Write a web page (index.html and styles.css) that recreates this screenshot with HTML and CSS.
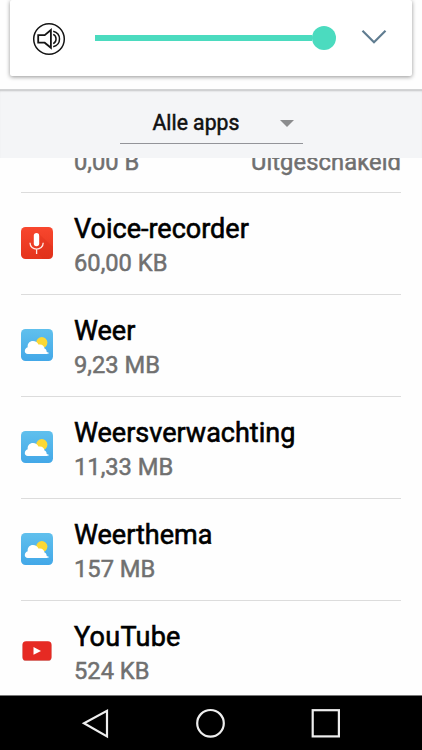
FILE: index.html
```
<!DOCTYPE html>
<html lang="nl">
<head>
<meta charset="utf-8">
<title>Apps</title>
<link rel="stylesheet" href="styles.css">
</head>
<body>
<svg width="0" height="0" class="defs" aria-hidden="true">
  <defs>
    <linearGradient id="sky" x1="0" y1="0" x2="0" y2="1"><stop offset="0" stop-color="#60c0ed"/><stop offset="1" stop-color="#43a8e8"/></linearGradient>
    <linearGradient id="red" x1="0" y1="0" x2="0" y2="1"><stop offset="0" stop-color="#f8472e"/><stop offset="1" stop-color="#e5341c"/></linearGradient>
    <symbol id="weather" viewBox="0 0 32 32">
      <rect width="32" height="32" rx="4.5" fill="url(#sky)"/>
      <circle cx="20.8" cy="13.6" r="5.6" fill="#fcd835"/>
      <path d="M6.8 24.9C4.8 24.9 3.8 23.8 3.8 22.3C3.8 20.3 5 18.8 6.7 18.3C6.2 14.6 8.6 11.9 12 11.9C14.6 11.9 16.5 13.2 17.4 15.6C20.6 14.7 23.4 16.6 23.5 19.6C25 20 25.6 21.2 25.6 22.7C26.4 23.4 27.3 23.8 28.3 24.1Q27.5 24.9 25.8 24.9Z" fill="#fff"/>
    </symbol>
  </defs>
</svg>
<div class="screen">
  <section class="panel">
    <div class="volume">
      <svg class="speaker" width="34" height="34" viewBox="0 0 34 34" fill="none" stroke="#151515">
        <circle cx="17" cy="17" r="15.3" stroke-width="1.5"/>
        <path d="M6.2 13.2H12.7L18.9 8V25.8L12.7 20.7H6.2Z" stroke-width="1.8"/>
        <path d="M21.2 12.4C25 14 25 20 21.2 21.6M21.2 9.2C29.6 11.4 29.6 22.6 21.2 24.8" stroke-width="1.5"/>
      </svg>
      <div class="slider"><div class="track"></div><div class="thumb"></div></div>
      <svg class="chevron" width="26" height="16" viewBox="0 0 26 16" fill="none" stroke="#607d91" stroke-width="2.2"><path d="M1.5 1.8L13 13.2L24.5 1.8"/></svg>
    </div>
  </section>
  <header class="filter">
    <div class="select"><span class="select-label">Alle apps</span><span class="caret"></span></div>
  </header>
  <main class="list">
    <div class="row row-cut"><span class="size">0,00 B</span><span class="size">Uitgeschakeld</span></div>
    <div class="row">
      <svg class="icon" viewBox="0 0 32 32"><rect width="32" height="32" rx="4.5" fill="url(#red)"/><path d="M18 7L32 20V28Q32 32 28 32H22L16 25Z" fill="#d82b17" opacity=".3"/><rect x="12.8" y="6" width="5.4" height="13.2" rx="2.7" fill="#fff"/><path d="M9 15.8C9 24.2 22.2 24.2 22.2 15.8M15.6 22V27" fill="none" stroke="#ffe9e5" stroke-width="1.3"/></svg>
      <div class="info"><div class="name">Voice-recorder</div><div class="size">60,00 KB</div></div>
    </div>
    <div class="row">
      <svg class="icon"><use href="#weather"/></svg>
      <div class="info"><div class="name">Weer</div><div class="size">9,23 MB</div></div>
    </div>
    <div class="row">
      <svg class="icon"><use href="#weather"/></svg>
      <div class="info"><div class="name">Weersverwachting</div><div class="size">11,33 MB</div></div>
    </div>
    <div class="row">
      <svg class="icon"><use href="#weather"/></svg>
      <div class="info"><div class="name">Weerthema</div><div class="size">157 MB</div></div>
    </div>
    <div class="row">
      <svg class="icon" viewBox="0 0 32 32"><rect x="1.5" y="6.8" width="29" height="19.3" rx="3.6" fill="#b8a5a3" opacity=".7"/><rect x="1.5" y="6.2" width="29" height="19.3" rx="3.6" fill="#e62a23"/><path d="M12.5 12L20 15.9L12.5 19.8Z" fill="#fff"/></svg>
      <div class="info"><div class="name name-wide">YouTube</div><div class="size">524 KB</div></div>
    </div>
  </main>
  <nav class="navbar">
    <svg width="422" height="54" viewBox="0 0 422 54" fill="none" stroke="#eee" stroke-width="2.2"><path d="M107 14.8V40.4L84 27.3Z"/><circle cx="210.5" cy="27.3" r="13.3"/><rect x="312.7" y="14.2" width="26.2" height="26.2"/></svg>
  </nav>
</div>
</body>
</html>
```
FILE: styles.css
```
* { box-sizing: border-box; }
body { margin: 0; background: #fff; font-family: Roboto, "Liberation Sans", sans-serif; }
.defs { position: absolute; }
.screen { width: 422px; height: 750px; display: flex; flex-direction: column; overflow: hidden; background: #fefefe; }
svg { display: block; flex: none; }
.panel { height: 90px; flex: none; padding: 0 10px; background: #fefefe; border-bottom: 1px solid #d2d3d4; }
.volume { height: 76px; display: flex; align-items: center; padding: 0 25px 0 22px; border-radius: 2px; background: #fff; box-shadow: 0 1px 4px rgba(0,0,0,.42); }
.speaker { margin-top: 1px; }
.slider { display: flex; align-items: center; width: 241px; margin-left: 29px; }
.track { flex: 1; height: 6px; background: #4bdbbf; }
.thumb { width: 24px; height: 24px; border-radius: 50%; background: #4bdbbf; }
.chevron { margin-left: 25px; margin-top: -3px; }
.filter { height: 68px; flex: none; display: flex; justify-content: center; padding-top: 15px; background: #f4f5f7; box-shadow: inset 0 2px 2px -1px rgba(0,0,0,.2); }
.select { width: 183px; height: 39px; display: flex; align-items: center; justify-content: space-between; padding: 0 9px 2px 33px; border-bottom: 1px solid #939499; }
.select-label { font-size: 21.2px; line-height: 28px; color: #111; -webkit-text-stroke: .5px #111; }
.caret { border: 7px solid transparent; border-top-color: #8b8c8e; border-bottom: 0; }
.list { flex: 1; min-height: 0; overflow: hidden; padding: 0 21px; }
.row { height: 102px; display: flex; padding-top: 20px; border-bottom: 1px solid #dcdcdc; }
.row:last-child { border-bottom: 0; }
.row-cut { height: 35px; padding-top: 0; padding-left: 53px; justify-content: space-between; }
.row-cut .size { margin-top: -11px; }
.row-cut .size:last-child { letter-spacing: .1px; }
.icon { width: 32px; height: 32px; margin-top: 14px; }
.info { margin-left: 21px; }
.name { font-size: 27px; line-height: 32px; color: #000; -webkit-text-stroke: .6px #000; white-space: nowrap; }
.name-wide { letter-spacing: .25px; }
.size { margin-top: 3px; font-size: 23.7px; line-height: 30px; color: #707070; -webkit-text-stroke: .5px #707070; white-space: nowrap; }
.navbar { height: 55px; flex: none; background: #000; border-top: 1px solid #777; }
```
